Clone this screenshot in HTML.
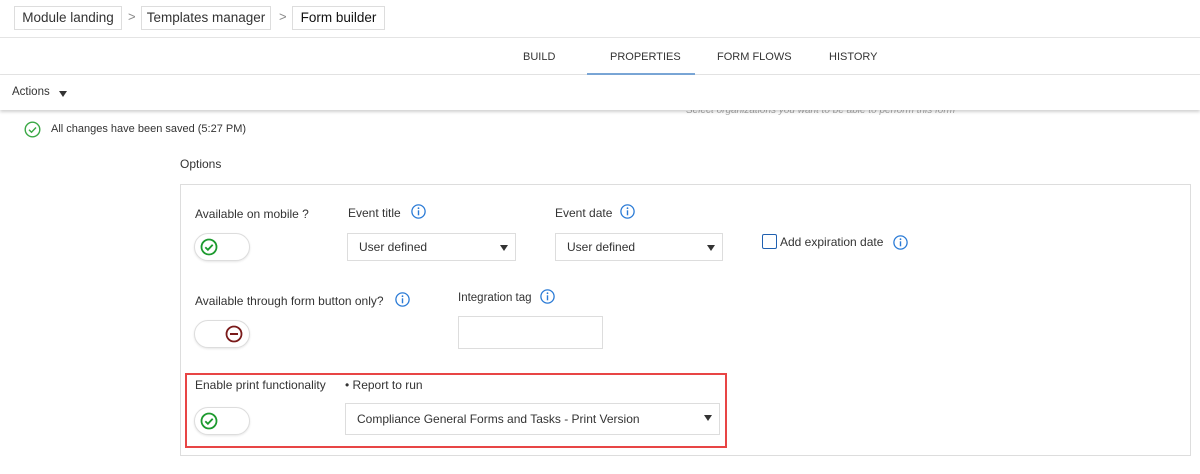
<!DOCTYPE html>
<html><head><style>
*{box-sizing:border-box;margin:0;padding:0}
body{width:1200px;height:474px;background:#fff;font-family:"Liberation Sans",Arial,sans-serif;color:#333;position:relative;overflow:hidden;font-size:12px}
.a{position:absolute;white-space:nowrap}
.bc{position:absolute;top:6px;height:24px;border:1px solid #ddd;background:#fff;font-size:13.5px;line-height:22px;color:#333;white-space:nowrap;text-align:center}
.chev{position:absolute;top:9px;font-size:13px;color:#888}
.tab{position:absolute;top:51px;font-size:11px;color:#333}
.box{position:absolute;border:1px solid #ddd;background:#fff}
.sel{position:absolute;border:1px solid #ddd;background:#fff;font-size:12px;line-height:26px;padding-left:11px;color:#333;white-space:nowrap}
.sel:after{content:"";position:absolute;right:7px;top:11px;border-left:4px solid transparent;border-right:4px solid transparent;border-top:6px solid #333}
.tog{position:absolute;width:56px;height:28px;border:1px solid #ddd;border-radius:14px;background:#fff;box-shadow:0 1px 2px rgba(0,0,0,.1)}
.lbl{position:absolute;font-size:12px;color:#333;white-space:nowrap}
.info{position:absolute;width:15px;height:15px}
</style></head><body>
<div class="bc" style="left:14px;width:108px">Module landing</div>
<div class="chev" style="left:128px">&gt;</div>
<div class="bc" style="left:141px;width:130px">Templates manager</div>
<div class="chev" style="left:279px">&gt;</div>
<div class="bc" style="left:292px;width:93px;color:#111">Form builder</div>
<div class="a" style="left:0;top:37px;width:1200px;height:1px;background:#e4e4e4"></div>
<div class="tab" style="left:523px">BUILD</div>
<div class="tab" style="left:610px">PROPERTIES</div>
<div class="tab" style="left:717px">FORM FLOWS</div>
<div class="tab" style="left:829px">HISTORY</div>
<div class="a" style="left:0;top:74px;width:1200px;height:1px;background:#e4e4e4"></div>
<div class="a" style="left:587px;top:73px;width:108px;height:2px;background:#7aa6d6"></div>
<div class="a" style="left:0;top:75px;width:1200px;height:35px;background:#fff;box-shadow:0 2px 3px rgba(0,0,0,.18);z-index:2"></div>
<div class="a" style="left:12px;top:86px;font-size:11.5px;z-index:3">Actions</div>
<div class="a" style="left:59px;top:91px;border-left:4px solid transparent;border-right:4px solid transparent;border-top:6px solid #333;z-index:3"></div>
<div class="a" style="left:686px;top:105px;font-size:10px;font-style:italic;color:#aaa">Select organizations you want to be able to perform this form</div>
<svg class="a" style="left:24px;top:121px" width="17" height="17" viewBox="0 0 17 17"><circle cx="8.5" cy="8.5" r="7.3" fill="none" stroke="#3aa845" stroke-width="1.4"/><path d="M5 8.7l2.5 2.5 4.5-4.7" fill="none" stroke="#3aa845" stroke-width="1.4"/></svg>
<div class="a" style="left:51px;top:123px;font-size:11px">All changes have been saved (5:27 PM)</div>
<div class="a" style="left:180px;top:157px;font-size:12px">Options</div>
<div class="box" style="left:180px;top:184px;width:1011px;height:272px"></div>

<div class="lbl" style="left:195px;top:207px">Available on mobile ?</div>
<div class="tog" style="left:194px;top:233px"></div>
<svg class="a" style="left:200px;top:238px" width="18" height="18" viewBox="0 0 18 18"><circle cx="9" cy="9" r="7.5" fill="none" stroke="#1c9a2e" stroke-width="1.8"/><path d="M5.3 9.2l2.6 2.6 4.8-5" fill="none" stroke="#1c9a2e" stroke-width="1.8"/></svg>

<div class="lbl" style="left:348px;top:206px">Event title</div>
<svg class="info" style="left:411px;top:204px" viewBox="0 0 15 15"><circle cx="7.5" cy="7.5" r="6.6" fill="none" stroke="#2b7bd6" stroke-width="1.3"/><rect x="6.8" y="6.3" width="1.4" height="5" fill="#2b7bd6"/><circle cx="7.5" cy="4.2" r="0.9" fill="#2b7bd6"/></svg>
<div class="sel" style="left:347px;top:233px;width:169px;height:28px">User defined</div>

<div class="lbl" style="left:555px;top:206px">Event date</div>
<svg class="info" style="left:620px;top:204px" viewBox="0 0 15 15"><circle cx="7.5" cy="7.5" r="6.6" fill="none" stroke="#2b7bd6" stroke-width="1.3"/><rect x="6.8" y="6.3" width="1.4" height="5" fill="#2b7bd6"/><circle cx="7.5" cy="4.2" r="0.9" fill="#2b7bd6"/></svg>
<div class="sel" style="left:555px;top:233px;width:168px;height:28px">User defined</div>

<div class="a" style="left:762px;top:234px;width:15px;height:15px;border:1.5px solid #2060b0;border-radius:2px"></div>
<div class="lbl" style="left:780px;top:235px">Add expiration date</div>
<svg class="info" style="left:893px;top:235px" viewBox="0 0 15 15"><circle cx="7.5" cy="7.5" r="6.6" fill="none" stroke="#2b7bd6" stroke-width="1.3"/><rect x="6.8" y="6.3" width="1.4" height="5" fill="#2b7bd6"/><circle cx="7.5" cy="4.2" r="0.9" fill="#2b7bd6"/></svg>

<div class="lbl" style="left:195px;top:294px">Available through form button only?</div>
<svg class="info" style="left:395px;top:292px" viewBox="0 0 15 15"><circle cx="7.5" cy="7.5" r="6.6" fill="none" stroke="#2b7bd6" stroke-width="1.3"/><rect x="6.8" y="6.3" width="1.4" height="5" fill="#2b7bd6"/><circle cx="7.5" cy="4.2" r="0.9" fill="#2b7bd6"/></svg>
<div class="tog" style="left:194px;top:320px"></div>
<svg class="a" style="left:225px;top:325px" width="18" height="18" viewBox="0 0 18 18"><circle cx="9" cy="9" r="7.5" fill="none" stroke="#7a1a1a" stroke-width="1.8"/><rect x="5" y="8" width="8" height="2" fill="#7a1a1a"/></svg>

<div class="lbl" style="left:458px;top:292px;font-size:11.5px">Integration tag</div>
<svg class="info" style="left:540px;top:289px" viewBox="0 0 15 15"><circle cx="7.5" cy="7.5" r="6.6" fill="none" stroke="#2b7bd6" stroke-width="1.3"/><rect x="6.8" y="6.3" width="1.4" height="5" fill="#2b7bd6"/><circle cx="7.5" cy="4.2" r="0.9" fill="#2b7bd6"/></svg>
<div class="box" style="left:458px;top:316px;width:145px;height:33px"></div>

<div class="a" style="left:185px;top:373px;width:542px;height:75px;border:2px solid #e84545"></div>
<div class="lbl" style="left:195px;top:378px">Enable print functionality</div>
<div class="lbl" style="left:345px;top:378px">• Report to run</div>
<div class="tog" style="left:194px;top:407px"></div>
<svg class="a" style="left:200px;top:412px" width="18" height="18" viewBox="0 0 18 18"><circle cx="9" cy="9" r="7.5" fill="none" stroke="#1c9a2e" stroke-width="1.8"/><path d="M5.3 9.2l2.6 2.6 4.8-5" fill="none" stroke="#1c9a2e" stroke-width="1.8"/></svg>
<div class="sel" style="left:345px;top:403px;width:375px;height:32px;line-height:30px">Compliance General Forms and Tasks - Print Version</div>
</body></html>
